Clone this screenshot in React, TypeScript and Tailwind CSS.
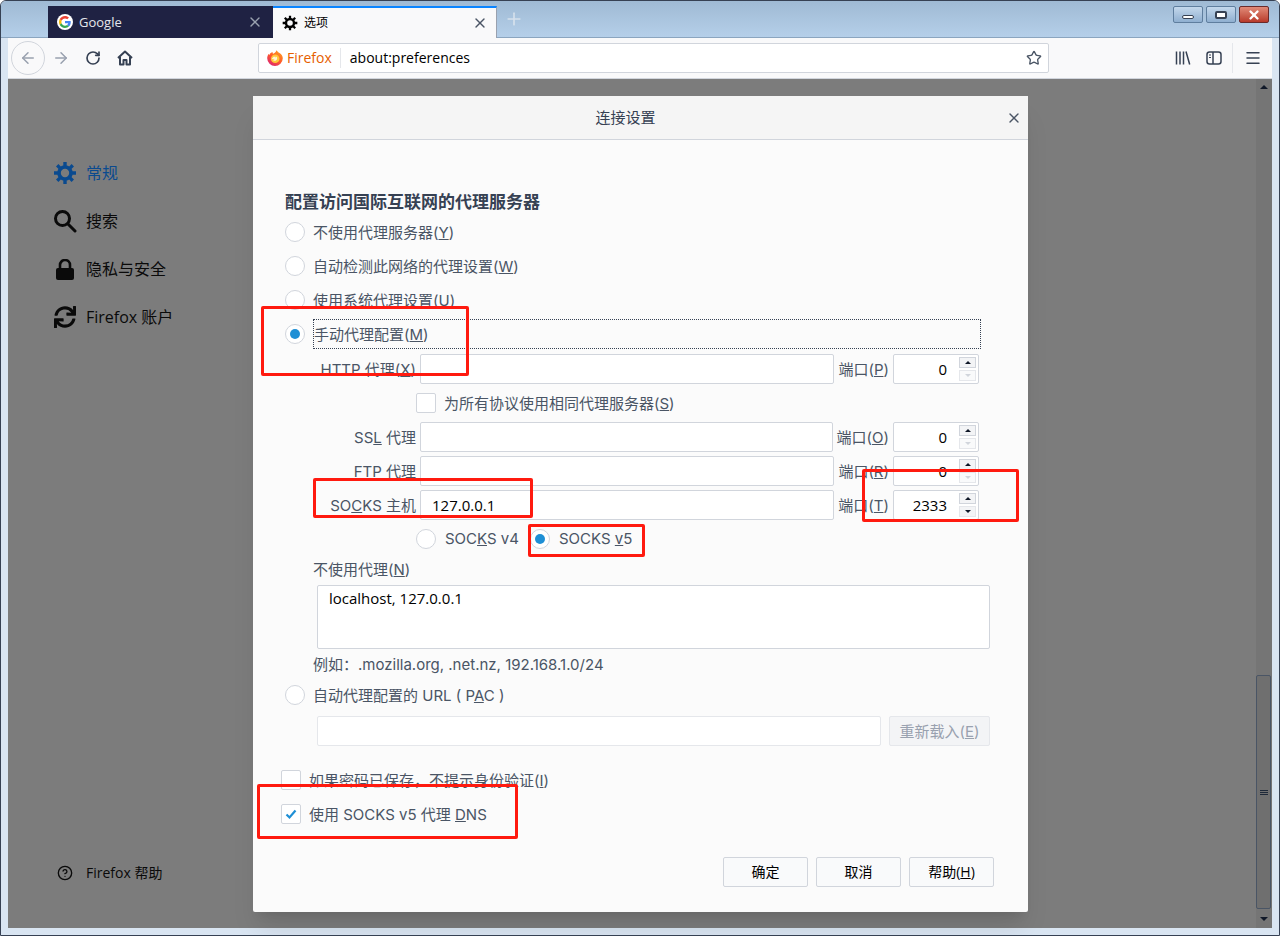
import type { ReactNode } from "react";
import { ArrowLeft, ArrowRight, CircleHelp, Menu, Plus, RotateCw, Star, X } from "lucide-react";
import { FaSync } from "react-icons/fa";

const valueFont = "font-['Open_Sans','Noto_Sans_CJK_SC',sans-serif]";

function GoogleIcon() {
  return (
    <span className="flex h-4 w-4 items-center justify-center rounded-full bg-white">
      <svg viewBox="0 0 48 48" className="h-3 w-3">
        <path fill="#EA4335" d="M24 9.5c3.5 0 6.6 1.2 9.1 3.6l6.8-6.8C35.8 2.4 30.4 0 24 0 14.6 0 6.5 5.4 2.6 13.2l7.9 6.2C12.4 13.7 17.7 9.5 24 9.5z" />
        <path fill="#4285F4" d="M46.9 24.5c0-1.6-.1-3.1-.4-4.5H24v9h12.9c-.6 3-2.2 5.5-4.7 7.2l7.6 5.9c4.5-4.1 7.1-10.2 7.1-17.6z" />
        <path fill="#FBBC05" d="M10.5 28.6c-.5-1.4-.8-3-.8-4.6s.3-3.2.8-4.6l-7.9-6.2C.9 16.5 0 20.1 0 24s.9 7.5 2.6 10.8l7.9-6.2z" />
        <path fill="#34A853" d="M24 48c6.5 0 11.9-2.1 15.8-5.8l-7.6-5.9c-2.1 1.4-4.9 2.3-8.2 2.3-6.3 0-11.6-4.2-13.5-9.9l-7.9 6.2C6.5 42.6 14.6 48 24 48z" />
      </svg>
    </span>
  );
}

function FirefoxLogo() {
  return (
    <svg viewBox="0 0 16 16" className="h-4 w-4">
      <defs>
        <linearGradient id="fx" x1="0.85" y1="0" x2="0.15" y2="1">
          <stop offset="0" stopColor="#ffa51f" />
          <stop offset="0.5" stopColor="#ff5a2a" />
          <stop offset="1" stopColor="#d81f7a" />
        </linearGradient>
      </defs>
      <path fill="url(#fx)" d="M8 16A7.8 7.8 0 0 1 .2 8.300C.2 6.400.9 4.800 1.800 3.700c.1.500.3.900.6 1.200C3 3.400 4.200 2.400 5.600 2c-.1.800.1 1.400.5 1.800C7.500 3.300 9 2 9.500.3c.7 1.300 1.700 2 3 2.800 2 1.200 3.300 3 3.300 5.200A7.800 7.800 0 0 1 8 16z" />
      <circle cx="8.200" cy="8.800" r="4.300" fill="#ffc83a" />
      <path fill="#fff4d6" d="M5 8.200c.8-.2 1.300-.8 1.500-1.400.7.100 1.200 0 1.800-.5-.1.500 0 .9.400 1.200.3-.3.500-.6.600-1 .8.700 1 1.500.8 2.400-.3 1.200-1.500 2-2.800 1.800-.9-.1-1.600-.6-2-1.200.8.300 1.700.300 2.300-.1-.7-.4-1.800-.2-2.600-.7z" />
    </svg>
  );
}

// eight-tooth gear used for the tab and the sidebar
function GearIcon({ className }: { className: string }) {
  return (
    <svg viewBox="0 0 24 24" className={className} fill="none" stroke="currentColor">
      <circle cx="12" cy="12" r="6" strokeWidth="3.600" />
      <path strokeWidth="3.400" d="M12 1v4M12 19v4M1 12h4M19 12h4M4.200 4.200l2.900 2.900M16.900 16.900l2.900 2.900M4.200 19.800l2.900-2.900M16.900 7.100l2.900-2.900" />
    </svg>
  );
}

function SearchIcon() {
  return (
    <svg viewBox="0 0 24 24" className="h-6 w-6" fill="none" stroke="currentColor" strokeWidth="3" strokeLinecap="round">
      <circle cx="9.500" cy="9.500" r="7" />
      <path d="M15 15l7 7" />
    </svg>
  );
}

function LockIcon() {
  return (
    <svg viewBox="0 0 18 21" className="h-5.25 w-4.5">
      <rect x="0" y="9" width="18" height="12" rx="2" fill="currentColor" />
      <path d="M4 10V6a5 5 0 0 1 10 0v4" fill="none" stroke="currentColor" strokeWidth="2.600" />
    </svg>
  );
}

function HomeIcon() {
  return (
    <svg viewBox="0 0 16 16" className="h-4 w-4 text-gray-700" fill="none" stroke="currentColor" strokeWidth="2" strokeLinejoin="round">
      <path d="M1 8l7-6.500L15 8M3 7v7.500h3.500V10h3v4.500H13V7" />
    </svg>
  );
}

function LibraryIcon() {
  return (
    <svg viewBox="0 0 16 16" className="h-4 w-4 text-gray-700" fill="none" stroke="currentColor" strokeWidth="1.500">
      <path d="M1.500 1.500v13M5 1.500v13M8.500 1.500v13M11 1.500l3.700 13" />
    </svg>
  );
}

function SidebarIcon() {
  return (
    <svg viewBox="0 0 16 16" className="h-4 w-4 text-gray-700" fill="none" stroke="currentColor" strokeWidth="1.500">
      <rect x="1" y="2" width="14" height="12" rx="2.500" />
      <path d="M7 2v12" />
      <path d="M3 5h2M3 7.500h2" strokeWidth="1" />
    </svg>
  );
}

function Triangle({ up, className }: { up?: boolean; className: string }) {
  return (
    <svg viewBox="0 0 8 4" className={className} fill="currentColor">
      <path d={up ? "M4 0l4 4H0z" : "M0 0h8L4 4z"} />
    </svg>
  );
}

function Radio({ checked }: { checked?: boolean }) {
  return (
    <span className="flex h-5 w-5 shrink-0 items-center justify-center rounded-full border border-gray-300 bg-white">
      {checked && <span className="h-2.5 w-2.5 rounded-full bg-[#1e8fd5]" />}
    </span>
  );
}

function Checkbox({ checked }: { checked?: boolean }) {
  return (
    <span className="flex h-5 w-5 shrink-0 items-center justify-center rounded-xs border border-gray-300 bg-white">
      {checked && (
        <svg viewBox="0 0 12 12" className="h-3 w-3 text-[#1e8fd5]" fill="none" stroke="currentColor" strokeWidth="2.200">
          <path d="M1.500 6.500l3 3 6-7" />
        </svg>
      )}
    </span>
  );
}

function Label({ children }: { children: ReactNode }) {
  return <span className="pt-0.5">{children}</span>;
}

function RadioRow({ children, checked }: { children: ReactNode; checked?: boolean }) {
  return (
    <div className="flex h-8 items-center gap-2">
      <Radio checked={checked} />
      <Label>{children}</Label>
    </div>
  );
}

function PortBox({ value, spinUp }: { value: string; spinUp?: boolean }) {
  return (
    <div className={`flex h-7.5 w-21.5 items-center justify-end gap-3 rounded-xs border border-gray-300 bg-white pr-0.5 text-black ${valueFont}`}>
      <span>{value}</span>
      <div className="flex flex-col gap-0.5">
        <span className="flex h-2.75 w-4.25 items-center justify-center border border-gray-300 bg-gray-100">
          <Triangle up className="h-0.75 w-1.5 text-gray-900" />
        </span>
        <span className={`flex h-2.75 w-4.25 items-center justify-center border border-gray-200 ${spinUp ? "bg-gray-100" : "bg-gray-50"}`}>
          <Triangle className={`h-0.75 w-1.5 ${spinUp ? "text-gray-900" : "text-gray-300"}`} />
        </span>
      </div>
    </div>
  );
}

function ProxyRow({ label, portKey, port, host, active }: { label: ReactNode; portKey: string; port: string; host?: string; active?: boolean }) {
  return (
    <div className="mr-2.75 flex h-7.5 items-center gap-1">
      <span className="w-[131px] shrink-0 pt-0.5 text-right">{label}</span>
      <div className={`flex h-7.5 flex-1 items-center rounded-xs border border-gray-300 bg-white px-2.75 text-black ${valueFont}`}>{host}</div>
      <span className="shrink-0 pt-0.5">
        端口(<u>{portKey}</u>)
      </span>
      <PortBox value={port} spinUp={active} />
    </div>
  );
}

function DialogButton({ children }: { children: ReactNode }) {
  return (
    <button className={`h-7.5 w-21.25 rounded-xs border border-gray-300 bg-gray-50 text-sm text-black ${valueFont}`}>{children}</button>
  );
}

function NavItem({ icon, label, active }: { icon: ReactNode; label: string; active?: boolean }) {
  return (
    <div className={`flex h-12 items-center gap-2.25 text-base ${active ? "text-[#0a4a8f]" : "text-neutral-950"}`}>
      <span className="flex w-6 justify-center">{icon}</span>
      <span>{label}</span>
    </div>
  );
}

function WinButton({ children, close }: { children: ReactNode; close?: boolean }) {
  return (
    <div
      className={`flex h-4.25 w-7.5 items-center justify-center rounded-xs border ${
        close
          ? "border-[#6b2a2a] bg-gradient-to-b from-[#e08a78] to-[#b8392a]"
          : "border-[#5f7e9e] bg-gradient-to-b from-[#c4d8ec] to-[#8fafd0]"
      }`}
    >
      {children}
    </div>
  );
}

function RedBox({ className }: { className: string }) {
  return <div className={`pointer-events-none absolute rounded-xs border-3 border-[#ff1a0f] ${className}`} />;
}

export default function App() {
  return (
    <div className="relative flex h-screen w-full flex-col overflow-hidden rounded-t-md border border-gray-700 bg-[#d9e5f2] font-['Open_Sans','Noto_Sans_CJK_SC',sans-serif]">
      {/* title bar with tabs */}
      <div className="flex h-9.25 items-end border-b border-[#8ba5bf] bg-gradient-to-b from-[#9fbad4] to-[#b5cfe9] pl-11.75 pr-2.5">
        <div className="-mb-px flex h-8 w-[225px] items-center bg-[#1f2243] pl-2.25 pr-2.5 text-[13px] text-gray-200">
          <GoogleIcon />
          <span className="ml-1.5 flex-1 pt-0.5">Google</span>
          <X className="h-4 w-4 text-gray-400" />
        </div>
        <div className="-mb-px flex h-8 w-[224px] items-center border-r border-t-2 border-r-gray-400 border-t-[#0a84ff] bg-[#f9f9fa] pl-2.25 pr-2 text-xs text-black">
          <GearIcon className="h-4 w-4" />
          <span className="ml-1.5 flex-1">选项</span>
          <X className="h-4 w-4 text-gray-600" />
        </div>
        <Plus className="mb-2 ml-1.75 h-5 w-5 text-gray-100 opacity-60" />
        <div className="mb-3.5 ml-auto flex gap-0.75">
          <WinButton>
            <span className="mt-1 h-1 w-3 rounded-xs border border-gray-700 bg-white" />
          </WinButton>
          <WinButton>
            <span className="h-2 w-3 rounded-xs border-2 border-gray-700 bg-white" />
          </WinButton>
          <WinButton close>
            <X className="h-3.5 w-3.5 text-white" strokeWidth={4} />
          </WinButton>
        </div>
      </div>

      {/* toolbar */}
      <div className="mx-1.75 flex h-10.25 shrink-0 items-center border-b border-gray-300 bg-[#f9f9fa]">
        <span className="ml-0.75 flex h-8.5 w-8.5 items-center justify-center rounded-full border border-gray-300">
          <ArrowLeft className="h-4.5 w-4.5 text-gray-400" />
        </span>
        <ArrowRight className="ml-1.75 h-4.5 w-4.5 text-gray-400" />
        <RotateCw className="ml-3.75 h-4 w-4 text-gray-700" strokeWidth={2.5} />
        <span className="ml-4">
          <HomeIcon />
        </span>
        <div className="ml-31.25 flex h-7.5 flex-1 items-center rounded-xs border border-gray-300 bg-white pr-1.5 text-black">
          <span className="ml-2">
            <FirefoxLogo />
          </span>
          <span className="ml-1 border-r border-gray-200 pr-2 text-sm text-[#e66000]">Firefox</span>
          <span className="ml-2.25 flex-1 text-sm">about:preferences</span>
          <Star className="h-4 w-4 text-gray-600" strokeWidth={2} />
        </div>
        <span className="ml-31.5">
          <LibraryIcon />
        </span>
        <span className="ml-3.75">
          <SidebarIcon />
        </span>
        <span className="ml-2.5 h-7.5 border-l border-gray-200" />
        <Menu className="ml-2.75 mr-2.5 h-4.5 w-4.5 text-gray-700" />
      </div>

      {/* dimmed preferences page */}
      <div className="relative mx-1.75 mb-1.75 flex flex-1 bg-[#7c7c7c]">
        <div className="flex flex-1 flex-col pb-10.75 pl-11.25 pt-17.5">
          <NavItem active icon={<GearIcon className="h-6 w-6" />} label="常规" />
          <NavItem icon={<SearchIcon />} label="搜索" />
          <NavItem icon={<LockIcon />} label="隐私与安全" />
          <NavItem icon={<FaSync className="h-5.5 w-5.5" />} label="Firefox 账户" />
          <div className="mt-auto flex h-6 items-center gap-2.25 text-sm text-neutral-950">
            <span className="flex w-6 justify-center">
              <CircleHelp className="h-4 w-4" />
            </span>
            <span>Firefox 帮助</span>
          </div>
        </div>

        {/* scrollbar */}
        <div className="flex w-4 flex-col items-center bg-[#757575]">
          <span className="flex h-4 items-center">
            <Triangle up className="h-1 w-2 text-gray-900" />
          </span>
          <div className="mt-auto flex h-58.5 w-3.75 flex-col items-center justify-center gap-px self-start rounded-xs border border-gray-600 bg-[#6f6f6f]">
            <span className="h-px w-2 bg-gray-800" />
            <span className="h-px w-2 bg-gray-800" />
            <span className="h-px w-2 bg-gray-800" />
          </div>
          <span className="flex h-4.75 items-center">
            <Triangle className="h-1 w-2 text-gray-900" />
          </span>
        </div>

        {/* connection settings dialog */}
        <div className="absolute left-[245px] top-[17px] flex h-[816px] w-[775px] flex-col rounded-xs bg-[#fbfbfb] font-['Inter','Noto_Sans_CJK_SC',sans-serif] text-[15px] leading-6 text-gray-600 shadow-xl">
          <div className="relative flex h-11 shrink-0 items-center justify-center border-b border-gray-300 bg-neutral-100 pr-7.5 text-gray-700">
            连接设置
            <X className="absolute right-1.5 h-4 w-4 text-gray-600" />
          </div>

          <div className="flex flex-1 flex-col pl-8 pr-9.5 pt-12">
            <div className="flex h-7 items-center text-[17px] font-semibold text-gray-700">配置访问国际互联网的代理服务器</div>
            <div className="flex flex-col gap-0.5">
              <RadioRow>
                不使用代理服务器(<u>Y</u>)
              </RadioRow>
              <RadioRow>
                自动检测此网络的代理设置(<u>W</u>)
              </RadioRow>
              <RadioRow>
                使用系统代理设置(<u>U</u>)
              </RadioRow>
              <div className="flex h-8 items-center gap-2">
                <Radio checked />
                <span className="mr-2.25 flex h-7.5 flex-1 items-center border border-dotted border-gray-700">
                  <Label>
                    手动代理配置(<u>M</u>)
                  </Label>
                </span>
              </div>
            </div>

            <div className="mt-1">
              <ProxyRow
                label={
                  <>
                    HTTP 代理(<u>X</u>)
                  </>
                }
                portKey="P"
                port="0"
              />
            </div>
            <div className="ml-[131px] mt-2 flex h-5.5 items-center gap-2">
              <Checkbox />
              <Label>
                为所有协议使用相同代理服务器(<u>S</u>)
              </Label>
            </div>
            <div className="mt-2 flex flex-col gap-1">
              <ProxyRow
                label={
                  <>
                    SS<u>L</u> 代理
                  </>
                }
                portKey="O"
                port="0"
              />
              <ProxyRow
                label={
                  <>
                    <u>F</u>TP 代理
                  </>
                }
                portKey="R"
                port="0"
              />
              <ProxyRow
                label={
                  <>
                    SO<u>C</u>KS 主机
                  </>
                }
                portKey="T"
                port="2333"
                host="127.0.0.1"
                active
              />
            </div>
            <div className="ml-[131px] mt-2 flex h-5.5 items-center gap-3.5">
              <div className="flex w-25 items-center gap-2.25 whitespace-nowrap">
                <Radio />
                <span>
                  SOC<u>K</u>S v4
                </span>
              </div>
              <div className="flex items-center gap-2.25">
                <Radio checked />
                <span>
                  SOCKS <u>v</u>5
                </span>
              </div>
            </div>
            <div className="ml-7 mt-2 flex h-5.5 items-center">
              <Label>
                不使用代理(<u>N</u>)
              </Label>
            </div>
            <div className={`ml-8 mt-1.25 h-16 rounded-xs border border-gray-300 bg-white px-2.75 text-black ${valueFont}`}>localhost, 127.0.0.1</div>
            <div className="ml-7 mt-1 flex h-6 items-center">例如：.mozilla.org, .net.nz, 192.168.1.0/24</div>
            <div className="mt-1.5 flex h-6 items-center gap-2">
              <Radio />
              <Label>
                自动代理配置的 URL ( P<u>A</u>C )
              </Label>
            </div>
            <div className="ml-8 mt-2.25 flex h-7.5 gap-2">
              <div className="flex-1 rounded-xs border border-gray-200 bg-white" />
              <div className="flex w-25.25 items-center justify-center rounded-xs border border-gray-200 bg-gray-100 text-gray-400">
                <Label>
                  重新载入(<u>E</u>)
                </Label>
              </div>
            </div>
            <div className="-ml-1 mt-5.5 flex h-6 items-center gap-2">
              <Checkbox />
              <Label>
                如果密码已保存，不提示身份验证(<u>I</u>)
              </Label>
            </div>
            <div className="-ml-1 mt-2.5 flex h-6 items-center gap-2">
              <Checkbox checked />
              <Label>
                使用 SOCKS v5 代理 <u>D</u>NS
              </Label>
            </div>
          </div>

          <div className="flex justify-end gap-2 pb-6.25 pr-8.5">
            <DialogButton>确定</DialogButton>
            <DialogButton>取消</DialogButton>
            <DialogButton>
              帮助(<u>H</u>)
            </DialogButton>
          </div>
        </div>
      </div>

      {/* red annotations drawn over the screenshot */}
      <RedBox className="left-[260px] top-[305px] h-[70px] w-[208px]" />
      <RedBox className="left-[312px] top-[477px] h-[40px] w-[220px]" />
      <RedBox className="left-[861px] top-[468px] h-[53px] w-[157px]" />
      <RedBox className="left-[527px] top-[523px] h-[33px] w-[117px]" />
      <RedBox className="left-[256px] top-[783px] h-[55px] w-[261px]" />
    </div>
  );
}
